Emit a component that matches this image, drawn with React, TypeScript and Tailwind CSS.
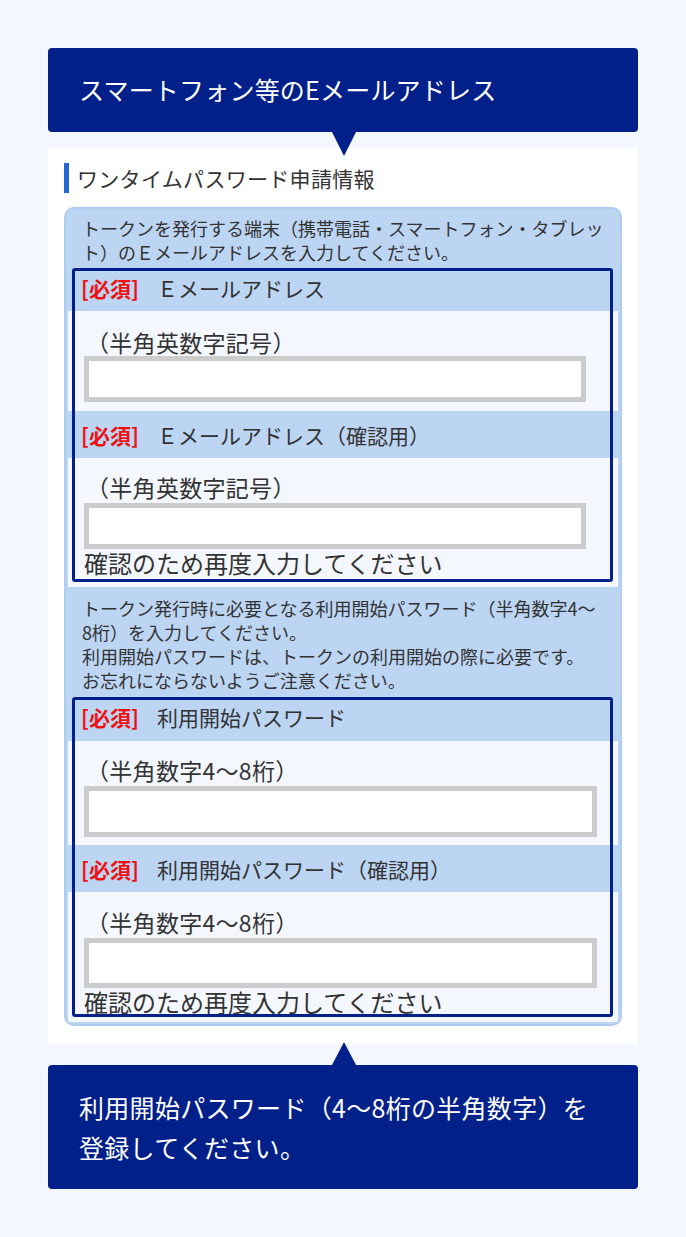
import React from "react";

const NAVY = "bg-[#02208a]";

function Required() {
  return <span className="font-bold text-[#ee1111]">[必須]</span>;
}

function Header({ label, h = "h-[47px]" }: { label: string; h?: string }) {
  return (
    <div className={`${h} flex items-center pl-[13px] text-[21px] leading-[28px] text-[#333333] whitespace-nowrap`}>
      <Required />
      <span className="ml-[18px]">{label}</span>
    </div>
  );
}

function Input({ w, h }: { w: string; h: string }) {
  return (
    <input
      type="text"
      className={`block ${w} ${h} border-[5px] border-[#cccccc] bg-white outline-none`}
    />
  );
}

function Label({ text }: { text: string }) {
  return <div className="text-[23px] leading-[28px] tracking-[0.3px] text-[#333333] whitespace-nowrap">{text}</div>;
}

function Note() {
  return (
    <div className="mt-[2px] text-[24px] leading-[24px] text-[#333333] whitespace-nowrap">
      確認のため再度入力してください
    </div>
  );
}

function NavyFrame() {
  return (
    <div className="pointer-events-none absolute top-[4px] left-[4px] right-[5px] bottom-[5px] rounded-[3px] border-[3px] border-[#02208a]" />
  );
}

export default function App() {
  return (
    <div className="min-h-[1237px] bg-[#f4f7fd] px-[48px] pt-[48px] font-['Noto_Sans_CJK_JP','Noto_Sans',sans-serif]">
      {/* top callout */}
      <div className={`relative z-10 flex h-[84px] items-center rounded-[4px] ${NAVY} pl-[31px] text-[25px] tracking-[0.2px] text-white whitespace-nowrap`}>
        スマートフォン等のEメールアドレス
        <svg className="absolute left-[284px] top-full" width="24" height="24" viewBox="0 0 24 24">
          <polygon points="0,0 24,0 12,24" fill="#02208a" />
        </svg>
      </div>

      {/* white panel */}
      <div className="mt-[16px] bg-white px-[16px] pt-[15px] pb-[18px]">
        <div className="flex h-[30px] items-center">
          <div className="h-[30px] w-[5px] bg-[#2468d2]" />
          <div className="ml-[8px] text-[21px] leading-[30px] tracking-[0.3px] text-[#333333] whitespace-nowrap">
            ワンタイムパスワード申請情報
          </div>
        </div>

        <div className="mt-[14px] rounded-[10px] border-2 border-[#aecbf1] bg-[#bcd5f3] px-[2px] pt-[7px] pb-[2px]">
          <div className="pl-[14px] text-[18px] leading-[24px] text-[#333333] whitespace-nowrap">
            トークンを発行する端末（携帯電話・スマートフォン・タブレッ
            <br />
            ト）のＥメールアドレスを入力してください。
          </div>

          {/* table 1 */}
          <div className="relative">
            <Header label="Ｅメールアドレス" />
            <div className="bg-[#f4f8fe] pl-[16px] pt-[17px] pb-[9px]">
              <div className="pl-[2px]">
                <Label text="（半角英数字記号）" />
              </div>
              <Input w="w-[502px]" h="h-[46px]" />
            </div>
            <Header label="Ｅメールアドレス（確認用）" />
            <div className="bg-[#f4f8fe] pl-[16px] pt-[15px] pb-[12px]">
              <div className="pl-[2px]">
                <Label text="（半角英数字記号）" />
              </div>
              <div className="mt-[2px]">
                <Input w="w-[502px]" h="h-[46px]" />
              </div>
              <Note />
            </div>
            <NavyFrame />
          </div>

          <div className="pl-[14px] pt-[9px] pb-[1px] text-[18px] leading-[24px] text-[#333333] whitespace-nowrap">
            トークン発行時に必要となる利用開始パスワード（半角数字4～
            <br />
            8桁）を入力してください。
            <br />
            利用開始パスワードは、トークンの利用開始の際に必要です。
            <br />
            お忘れにならないようご注意ください。
          </div>

          {/* table 2 */}
          <div className="relative">
            <Header label="利用開始パスワード" h="h-[48px]" />
            <div className="bg-[#f4f8fe] pl-[16px] pt-[15px] pb-[8px]">
              <div className="pl-[2px]">
                <Label text="（半角数字4～8桁）" />
              </div>
              <div className="mt-[2px]">
                <Input w="w-[513px]" h="h-[51px]" />
              </div>
            </div>
            <Header label="利用開始パスワード（確認用）" />
            <div className="bg-[#f4f8fe] pl-[16px] pt-[16px] pb-[8px]">
              <div className="pl-[2px]">
                <Label text="（半角数字4～8桁）" />
              </div>
              <div className="mt-[2px]">
                <Input w="w-[513px]" h="h-[50px]" />
              </div>
              <Note />
            </div>
            <NavyFrame />
          </div>
        </div>
      </div>

      {/* bottom callout */}
      <div className={`relative mt-[21px] rounded-[4px] ${NAVY} py-[22px] pl-[31px] text-[25px] leading-[40px] tracking-[0.3px] text-white whitespace-nowrap`}>
        <svg className="absolute left-[284px] bottom-full" width="24" height="23" viewBox="0 0 24 23">
          <polygon points="12,0 24,23 0,23" fill="#02208a" />
        </svg>
        利用開始パスワード（4～8桁の半角数字）を
        <br />
        登録してください。
      </div>
    </div>
  );
}
